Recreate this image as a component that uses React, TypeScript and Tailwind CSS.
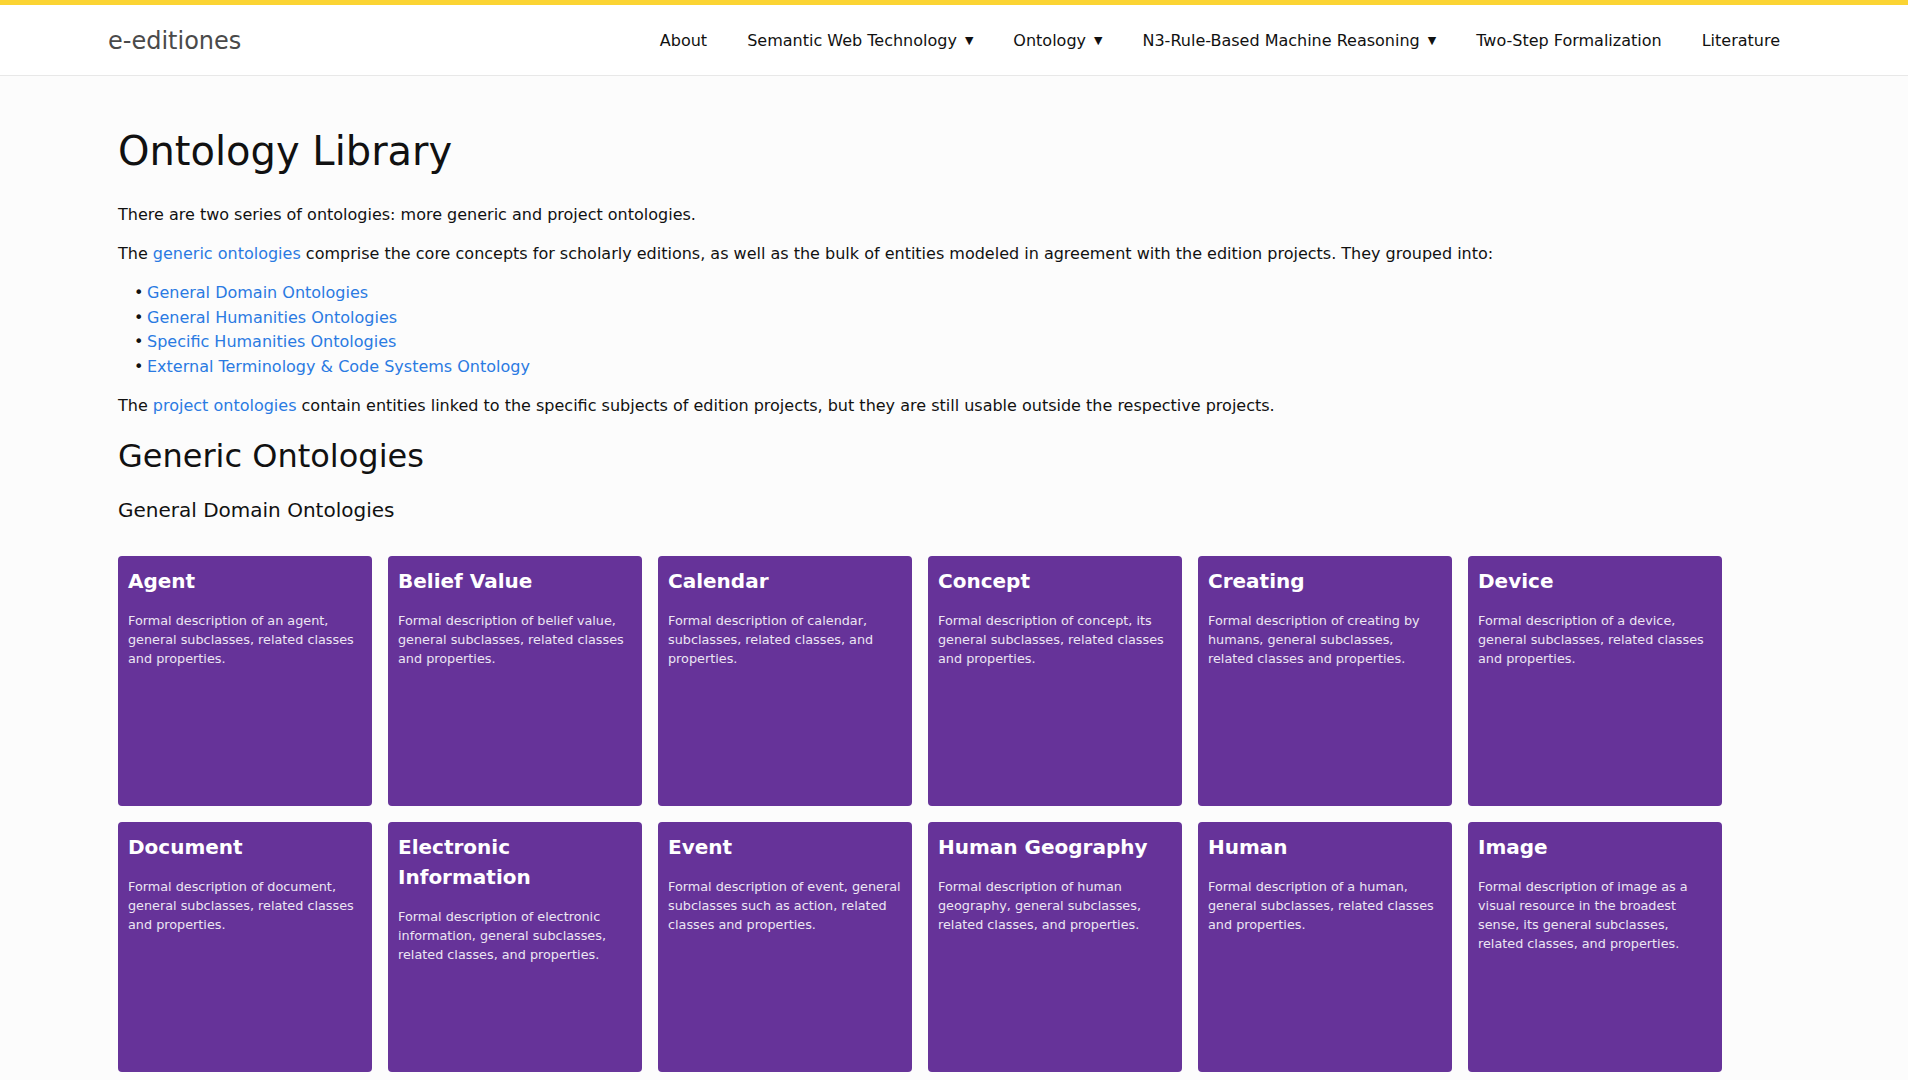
const font = { fontFamily: '"DejaVu Sans", sans-serif' };

const navItems = [
  { label: "About", menu: false },
  { label: "Semantic Web Technology", menu: true },
  { label: "Ontology", menu: true },
  { label: "N3-Rule-Based Machine Reasoning", menu: true },
  { label: "Two-Step Formalization", menu: false },
  { label: "Literature", menu: false },
];

const cards = [
  { title: "Agent", text: "Formal description of an agent, general subclasses, related classes and properties." },
  { title: "Belief Value", text: "Formal description of belief value, general subclasses, related classes and properties." },
  { title: "Calendar", text: "Formal description of calendar, subclasses, related classes, and properties." },
  { title: "Concept", text: "Formal description of concept, its general subclasses, related classes and properties." },
  { title: "Creating", text: "Formal description of creating by humans, general subclasses, related classes and properties." },
  { title: "Device", text: "Formal description of a device, general subclasses, related classes and properties." },
  { title: "Document", text: "Formal description of document, general subclasses, related classes and properties." },
  { title: "Electronic Information", text: "Formal description of electronic information, general subclasses, related classes, and properties." },
  { title: "Event", text: "Formal description of event, general subclasses such as action, related classes and properties." },
  { title: "Human Geography", text: "Formal description of human geography, general subclasses, related classes, and properties." },
  { title: "Human", text: "Formal description of a human, general subclasses, related classes and properties." },
  { title: "Image", text: "Formal description of image as a visual resource in the broadest sense, its general subclasses, related classes, and properties." },
];

const groups = [
  "General Domain Ontologies",
  "General Humanities Ontologies",
  "Specific Humanities Ontologies",
  "External Terminology & Code Systems Ontology",
];

export default function App() {
  return (
    <div className="min-h-screen bg-[#fcfcfc] text-[#111]" style={font}>
      {/* top bar */}
      <header className="bg-white border-t-[5px] border-[#fbd433] border-b border-b-[#e8e8e8]">
        <div className="h-[70px] pt-[2px] flex items-center justify-between px-[108px]">
          <a href="#" className="text-[24px] text-[#4a4a4a]">e-editiones</a>
          <nav className="flex items-center">
            {navItems.map((item) => (
              <a key={item.label} href="#" className="px-5 text-[16px] text-[#111] flex items-center">
                {item.label}
                {item.menu && <span className="ml-[8px] text-[11px]">▼</span>}
              </a>
            ))}
          </nav>
        </div>
      </header>

      <main className="px-[118px] pt-[51px] pb-10">
        <h1 className="text-[40px] leading-[48px] mb-[28px]">Ontology Library</h1>

        <p className="text-[16px] leading-6 mb-[15px]">
          There are two series of ontologies: more generic and project ontologies.
        </p>
        <p className="text-[16px] leading-6 mb-[15px]">
          The <a href="#" className="text-[#2a7ae2]">generic ontologies</a> comprise the core concepts for scholarly
          editions, as well as the bulk of entities modeled in agreement with the edition projects. They grouped into:
        </p>
        <ul className="pl-[16px] mb-[14px]">
          {groups.map((g) => (
            <li key={g} className="flex text-[16px] leading-[24.7px]">
              <span className="w-[13px] shrink-0">•</span>
              <a href="#" className="text-[#2a7ae2]">{g}</a>
            </li>
          ))}
        </ul>
        <p className="text-[16px] leading-6">
          The <a href="#" className="text-[#2a7ae2]">project ontologies</a> contain entities linked to the specific
          subjects of edition projects, but they are still usable outside the respective projects.
        </p>

        <h2 className="text-[32px] leading-[38px] mt-[19px] mb-[20px]">Generic Ontologies</h2>
        <h3 className="text-[20px] leading-[30px] mb-[31px]">General Domain Ontologies</h3>

        <div className="flex flex-wrap gap-4">
          {cards.map((c) => (
            <div key={c.title} className="w-[254px] h-[250px] rounded bg-[#663399] text-white px-[10px] pt-[10px]">
              <h4 className="text-[20px] leading-[30px] font-bold">{c.title}</h4>
              <p className="mt-[15px] text-[12.8px] leading-[19.2px] text-[#ece6f3]">{c.text}</p>
            </div>
          ))}
        </div>
      </main>
    </div>
  );
}
